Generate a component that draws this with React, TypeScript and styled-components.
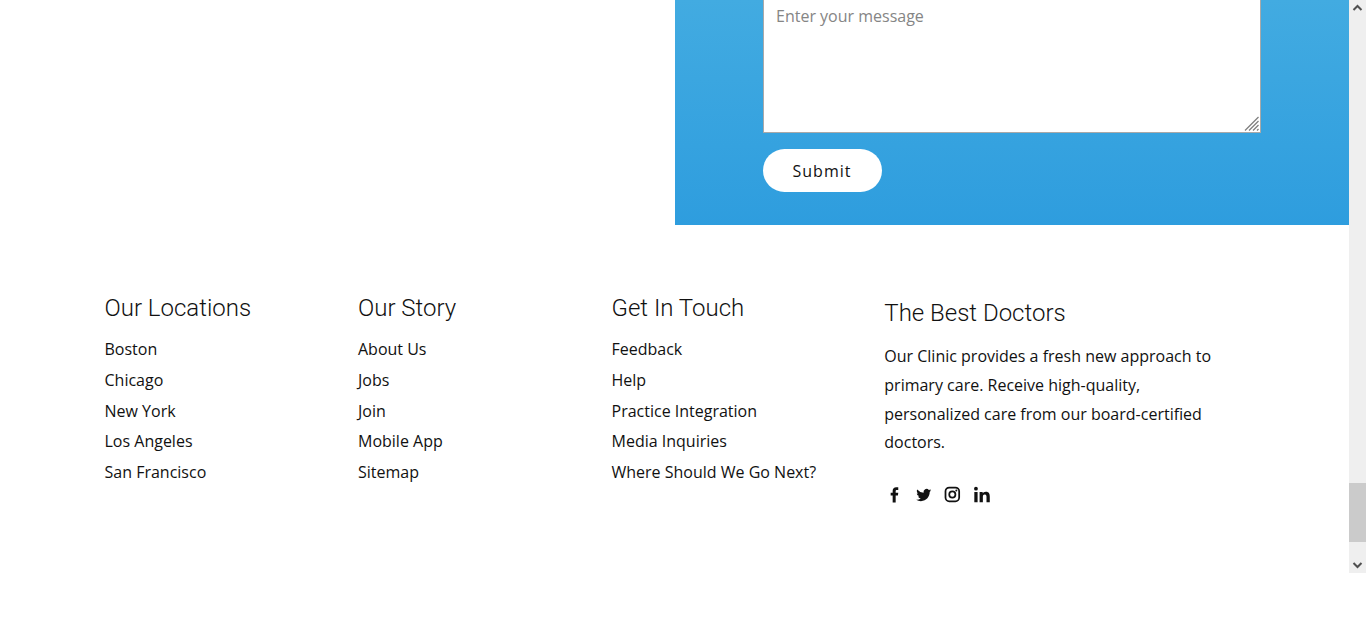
import React from 'react';
import styled, { createGlobalStyle } from 'styled-components';

const Global = createGlobalStyle`
  *, *::before, *::after { box-sizing: border-box; }
  body { margin: 0; background: #fff; color: #111; font: 400 16px/1.8 'Open Sans', sans-serif; overflow: hidden; }
`;

const Page = styled.div`
  display: flex;
  align-items: flex-start;
  width: 1366px;
  height: 643px;
  overflow: hidden;
`;

const Content = styled.main`
  width: 1349px;
  flex: none;
`;

const ContactPanel = styled.section`
  margin-left: 675px;
  height: 225px;
  padding-left: 88px;
  background: linear-gradient(#42abe1, #2e9dde);
`;

const MessageField = styled.div`
  position: relative;
  width: 498px;
  height: 133px;
  padding: 2px 12px;
  background: #fff;
  border: solid #a9a9a9;
  border-width: 0 1px 1px;
  color: #858585;
`;

const Grip = styled.svg`
  position: absolute;
  right: 0;
  bottom: 0;
`;

const SubmitButton = styled.button`
  display: block;
  width: 119px;
  height: 43px;
  margin-top: 16px;
  padding: 0 1px 0 0;
  border: 0;
  border-radius: 22px;
  background: #fff;
  color: #111;
  font: 400 16px/24px 'Open Sans', sans-serif;
  letter-spacing: 1px;
`;

const Footer = styled.footer`
  display: grid;
  grid-template-columns: 253.5px 253.5px 272.8px 345px;
  padding: 69px 0 0 104.5px;
`;

const Column = styled.div<{ $offset?: number }>`
  padding-top: ${({ $offset = 0 }) => $offset}px;
`;

const Heading = styled.h3`
  margin: 0;
  font: 300 24px/29px Roboto, sans-serif;
`;

const Links = styled.ul`
  margin: 11px 0 0;
  padding: 0;
  list-style: none;
  line-height: 30.75px;
`;

const About = styled.p`
  width: 342px;
  margin: 14px 0 0;
`;

const Socials = styled.div`
  display: flex;
  gap: 9px;
  margin: 27.4px 0 0;
  svg { display: block; width: 20px; height: 20px; fill: #111; }
`;

const Scrollbar = styled.div`
  display: flex;
  flex-direction: column;
  width: 17px;
  height: 573px;
  background: #efefef;
  svg { display: block; }
`;

const Thumb = styled.div`
  height: 59px;
  margin: 466px 0 auto;
  background: #cbcbcb;
`;

const columns = [
  { title: 'Our Locations', items: ['Boston', 'Chicago', 'New York', 'Los Angeles', 'San Francisco'] },
  { title: 'Our Story', items: ['About Us', 'Jobs', 'Join', 'Mobile App', 'Sitemap'] },
  { title: 'Get In Touch', items: ['Feedback', 'Help', 'Practice Integration', 'Media Inquiries', 'Where Should We Go Next?'] },
];

const Arrow = ({ down = false }: { down?: boolean }) => (
  <svg width="17" height="17" viewBox="0 0 17 17">
    <path d={down ? 'M4.5 7l4 4 4-4' : 'M4.5 10l4-4 4 4'} fill="none" stroke="#505050" strokeWidth="2" />
  </svg>
);

export default function App() {
  return (
    <>
      <Global />
      <Page>
        <Content>
          <ContactPanel>
            <MessageField>
              Enter your message
              <Grip width="17" height="17" viewBox="0 0 17 17">
                <path d="M2 15.5l13.5-13.5M6 15.5l9.5-9.5M10 15.5l5.5-5.5M14 15.5l1.5-1.5" stroke="#808080" strokeWidth="1.3" />
              </Grip>
            </MessageField>
            <SubmitButton>Submit</SubmitButton>
          </ContactPanel>
          <Footer>
            {columns.map(({ title, items }) => (
              <Column key={title}>
                <Heading>{title}</Heading>
                <Links>{items.map((item) => <li key={item}>{item}</li>)}</Links>
              </Column>
            ))}
            <Column $offset={5}>
              <Heading>The Best Doctors</Heading>
              <About>
                Our Clinic provides a fresh new approach to primary care. Receive high-quality, personalized care from our board-certified doctors.
              </About>
              <Socials>
                <svg viewBox="-0.4 0.2 24 24"><path d="M13.6 21.2v-8.3h2.7l.4-3.3h-3.1v-1.8c0-.9.4-1.5 1.6-1.5h1.5V3c-.3 0-1.3-.1-2.5-.1-2.5 0-4.2 1.5-4.2 4.2v2.5H7.6v3.3H10v8.3h3.6z" /></svg>
                <svg viewBox="-2 -1.2 26.6 26.6"><path d="M22.23 5.924a8.212 8.212 0 01-2.357.646 4.115 4.115 0 001.804-2.27 8.221 8.221 0 01-2.606.996 4.103 4.103 0 00-6.991 3.742 11.647 11.647 0 01-8.457-4.287 4.087 4.087 0 00-.556 2.063 4.1 4.1 0 001.825 3.415 4.09 4.09 0 01-1.859-.513v.052a4.104 4.104 0 003.292 4.023 4.099 4.099 0 01-1.853.07 4.11 4.11 0 003.833 2.85 8.236 8.236 0 01-5.096 1.756 8.33 8.33 0 01-.979-.057 11.617 11.617 0 006.29 1.843c7.547 0 11.675-6.252 11.675-11.675 0-.178-.004-.355-.012-.531a8.298 8.298 0 002.047-2.123z" /></svg>
                <svg viewBox="-0.4 0.7 24 24">
                  <rect x="3.8" y="3.8" width="16.4" height="16.4" rx="4.5" fill="none" stroke="#111" strokeWidth="2.1" />
                  <circle cx="12" cy="12" r="3.7" fill="none" stroke="#111" strokeWidth="2.1" />
                  <circle cx="16.8" cy="7.2" r="1.2" />
                </svg>
                <svg viewBox="-0.35 1.2 22 22"><path d="M3.3 8.8h3.6v11.4H3.3zM5.1 3.1a2.1 2.1 0 110 4.2 2.1 2.1 0 010-4.2zM9.1 8.8h3.4v1.6h.1c.5-.9 1.6-1.9 3.4-1.9 3.6 0 4.3 2.4 4.3 5.5v6.2h-3.6v-5.5c0-1.3 0-3-1.9-3s-2.1 1.4-2.1 2.9v5.6H9.1z" /></svg>
              </Socials>
            </Column>
          </Footer>
        </Content>
        <Scrollbar>
          <Arrow />
          <Thumb />
          <Arrow down />
        </Scrollbar>
      </Page>
    </>
  );
}
